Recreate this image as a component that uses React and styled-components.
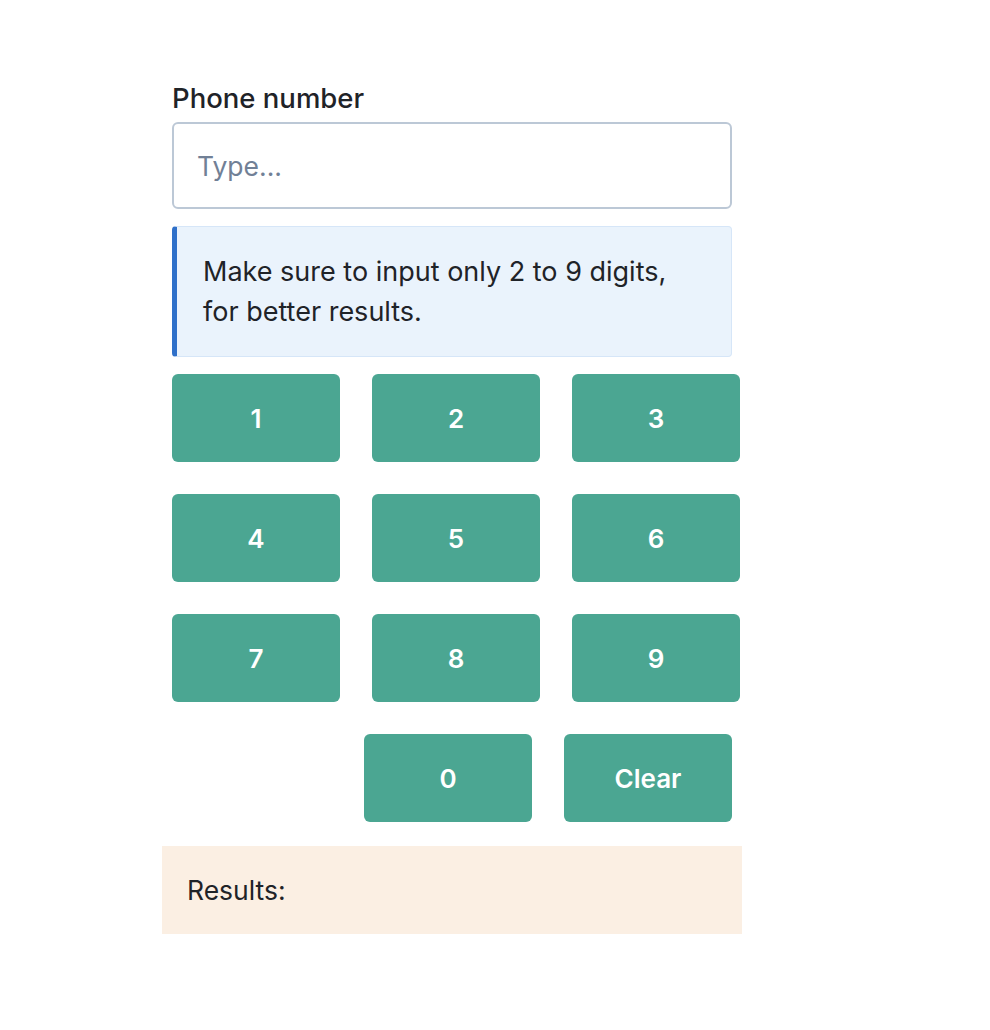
import React, { useState } from 'react'
import styled, { createGlobalStyle } from 'styled-components'

const GlobalStyle = createGlobalStyle`
  body {
    margin: 0;
    background: #ffffff;
    font-family: Inter, "Liberation Sans", sans-serif;
    color: #1f2328;
  }
`;

const Page = styled.main`
  padding: 78px 0 0 172px;
`;

const Form = styled.div`
  width: 560px;
  display: flex;
  flex-direction: column;
`;

const Label = styled.label`
  font-size: 27.5px;
  line-height: 40px;
  font-weight: 500;
  color: #1f2328;
  margin-bottom: 4px;
`;

const Input = styled.input`
  box-sizing: border-box;
  width: 560px;
  height: 87px;
  padding: 0 23px;
  border: 2px solid #bcc8d6;
  border-radius: 6px;
  font-family: inherit;
  font-size: 26.5px;
  color: #1f2328;
  outline: none;

  &::placeholder {
    color: #718096;
  }
`;

const Notice = styled.div`
  box-sizing: border-box;
  margin-top: 17px;
  width: 560px;
  padding: 25px 24px 24px 26px;
  background: #eaf3fc;
  border: 1px solid #d6e6f8;
  border-left: 5px solid #2f70c9;
  border-radius: 4px;
  font-size: 27px;
  line-height: 40px;
  color: #1f2328;
`;

const Keypad = styled.div`
  margin-top: 17px;
  display: flex;
  flex-direction: column;
  gap: 32px;
`;

const Row = styled.div`
  display: flex;
  gap: 32px;
  padding-left: ${p => p.$offset || 0}px;
`;

const Key = styled.button`
  flex: 0 0 168px;
  width: 168px;
  height: 88px;
  border: none;
  border-radius: 6px;
  background: #4ba692;
  color: #ffffff;
  font-family: inherit;
  font-size: 26px;
  font-weight: 600;
  cursor: pointer;
`;

const Results = styled.div`
  box-sizing: border-box;
  margin: 24px 0 0 -10px;
  width: 580px;
  height: 88px;
  padding: 0 25px;
  display: flex;
  align-items: center;
  background: #fbefe3;
  font-size: 26.5px;
  color: #1f2328;
`;

const rows = [['1', '2', '3'], ['4', '5', '6'], ['7', '8', '9']];

export default function App() {
  const [value, setValue] = useState('')

  const press = d => setValue(v => (v + d).slice(0, 9))

  return (
    <Page>
      <GlobalStyle />
      <Form>
        <Label htmlFor="phone">Phone number</Label>
        <Input
          id="phone"
          placeholder="Type..."
          value={value}
          onChange={e => setValue(e.target.value.replace(/\D/g, ''))}
        />
        <Notice>
          Make sure to input only 2 to 9 digits,
          <br />
          for better results.
        </Notice>
        <Keypad>
          {rows.map((r, i) => (
            <Row key={i}>
              {r.map(d => <Key key={d} onClick={() => press(d)}>{d}</Key>)}
            </Row>
          ))}
          <Row $offset={192}>
            <Key onClick={() => press('0')}>0</Key>
            <Key onClick={() => setValue('')}>Clear</Key>
          </Row>
        </Keypad>
        <Results>Results:</Results>
      </Form>
    </Page>
  )
}
